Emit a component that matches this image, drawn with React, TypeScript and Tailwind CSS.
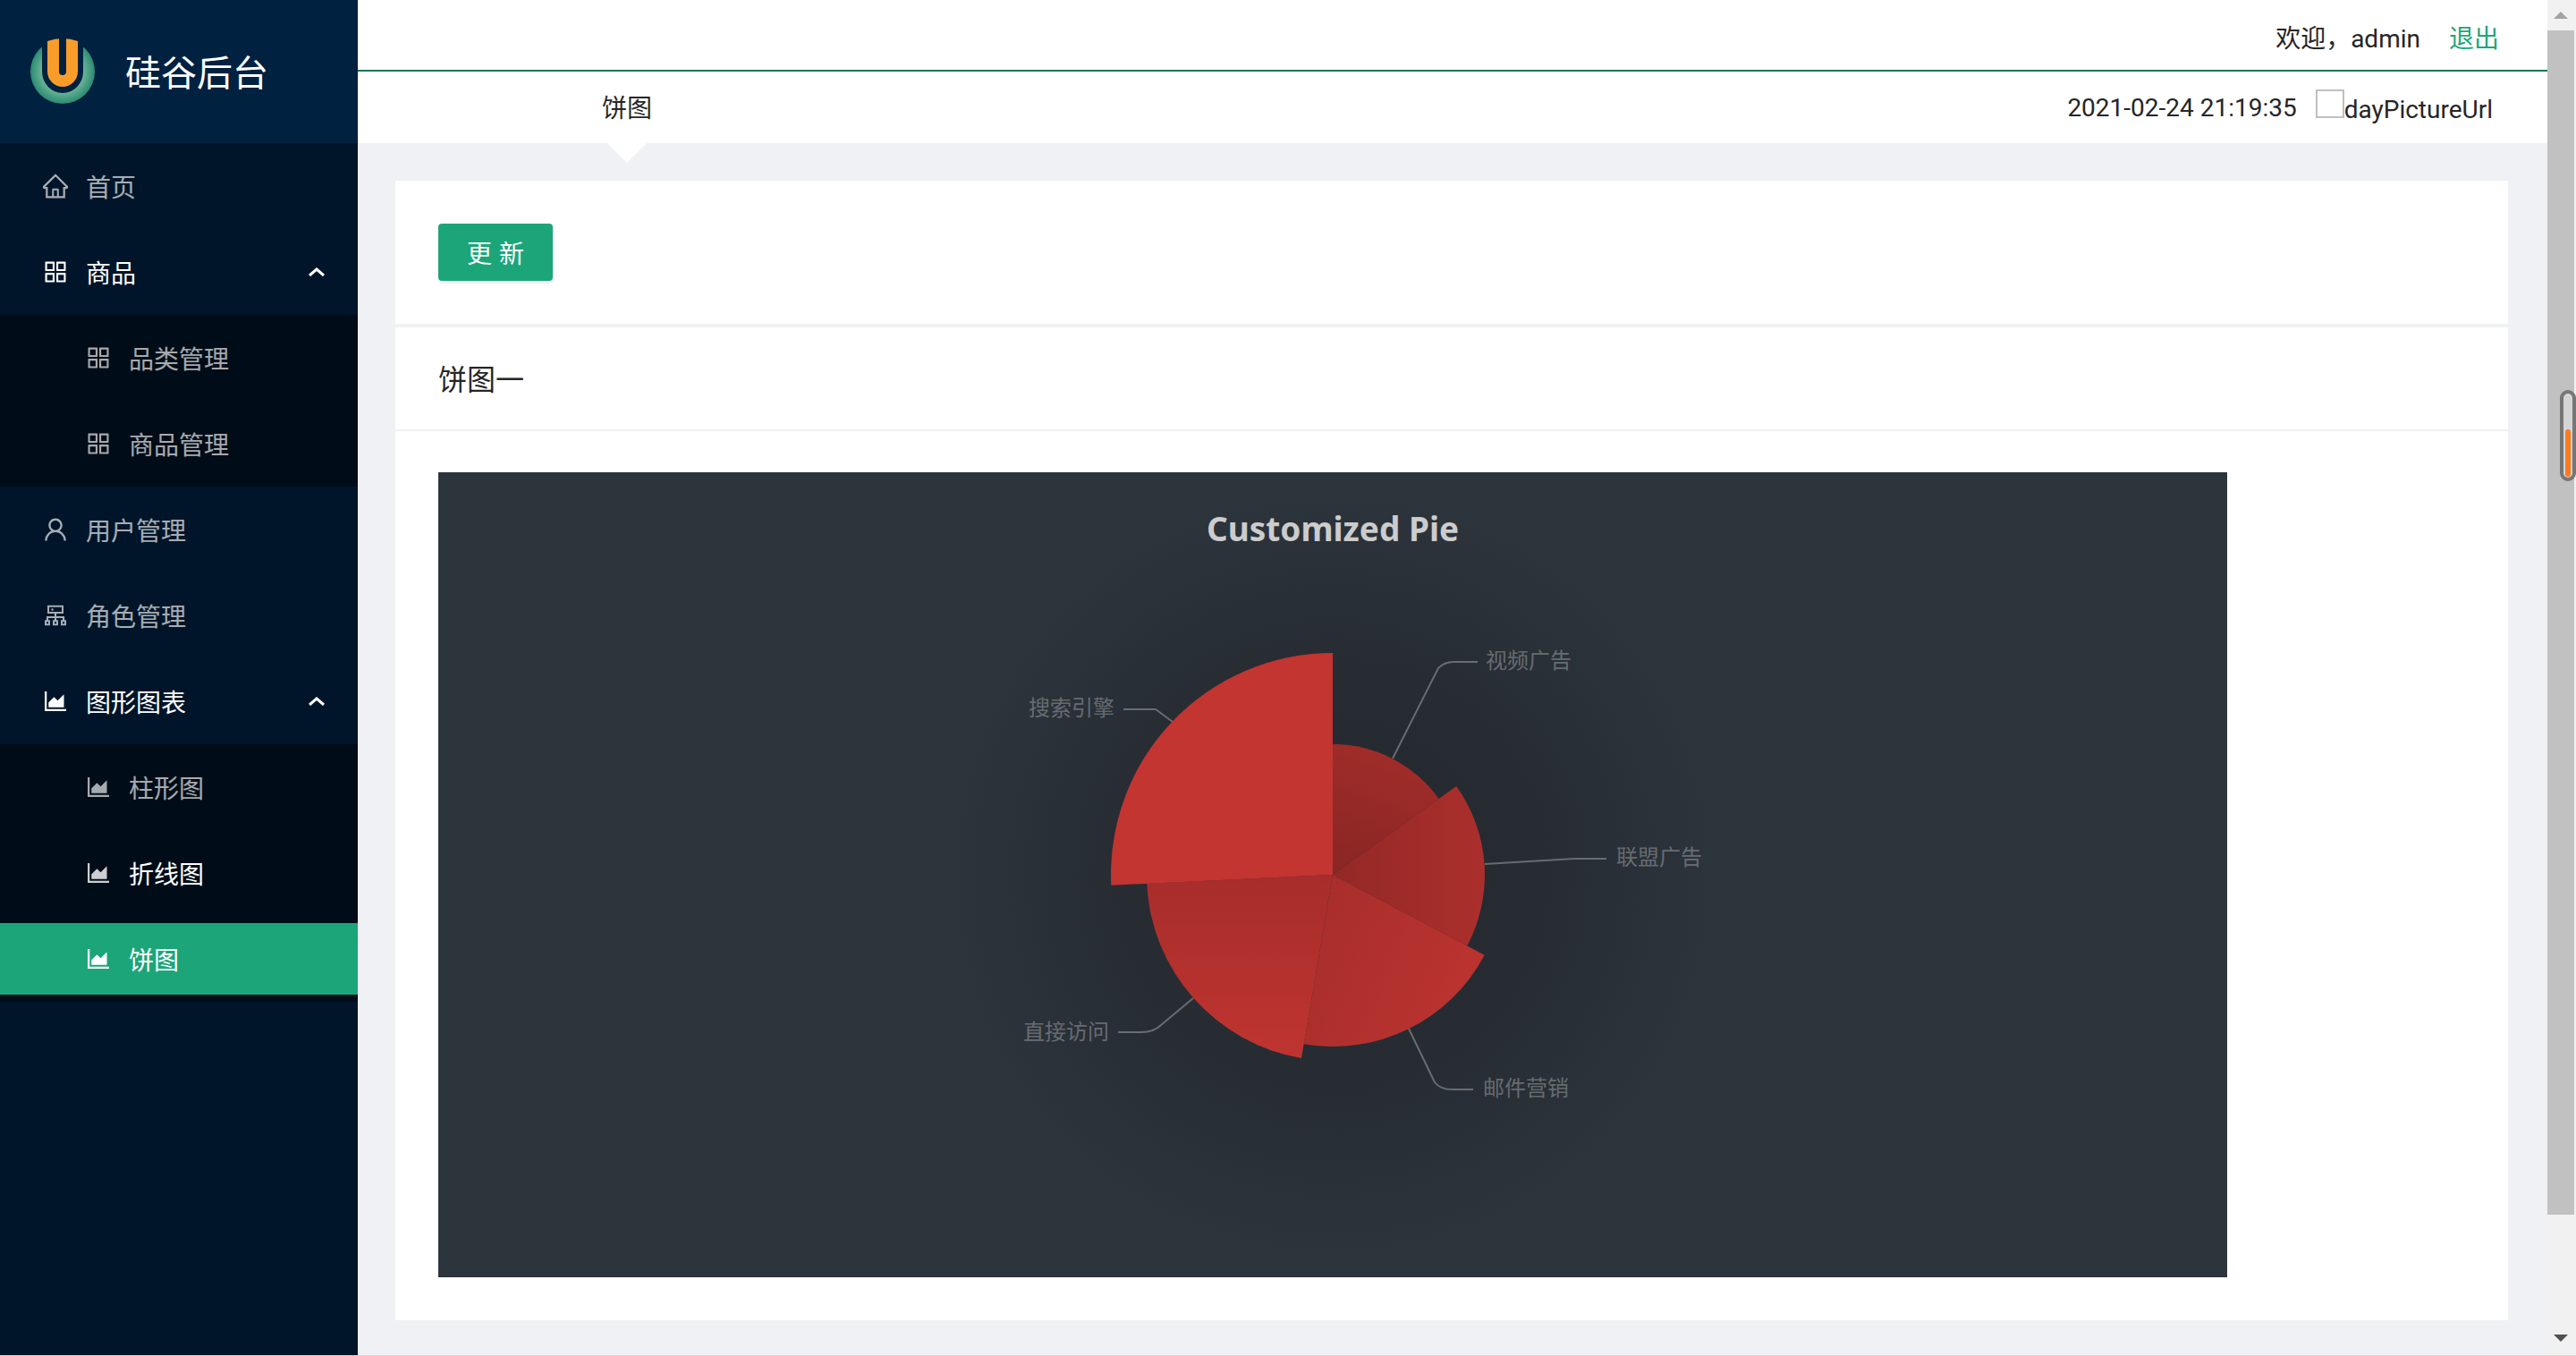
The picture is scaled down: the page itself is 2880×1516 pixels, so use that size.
import { AiOutlineCluster, AiOutlineAppstore, AiOutlineHome, AiOutlineUser, AiOutlineAreaChart } from 'react-icons/ai'

const cjk = "Roboto, 'Noto Sans CJK SC', sans-serif"

type Item = { label: string; icon: React.ReactNode; sub?: boolean; bright?: boolean; active?: boolean; open?: boolean }

const iconClass = '-ml-0.5 text-[32px]'
const Chart = <AiOutlineAreaChart className={iconClass} />
const Store = <AiOutlineAppstore className={iconClass} />

function MenuRow({ label, icon, sub, bright, active, open }: Item) {
  return (
    <div
      className={`flex h-20 items-center ${sub ? 'pl-24' : 'pl-12'} pr-[37px] text-[28px] ${
        active ? 'bg-[#1da57a] text-white' : bright ? 'text-white' : 'text-white/65'
      }`}
    >
      <span className="flex w-12 shrink-0">{icon}</span>
      <span className="flex-1 pt-[6px]">{label}</span>
      {open && (
        <svg width="18" height="10" viewBox="0 0 18 10" fill="none" stroke="white" strokeWidth="3">
          <path d="M1 9 L9 2 L17 9" />
        </svg>
      )}
    </div>
  )
}

function SubMenu({ items }: { items: Item[] }) {
  return (
    <div className="flex flex-col gap-4 bg-[#000c17] py-2">
      {items.map((item) => (
        <MenuRow key={item.label} {...item} sub />
      ))}
    </div>
  )
}

function Sidebar() {
  return (
    <aside className="w-[400px] shrink-0 bg-[#001529]">
      <div className="flex h-40 items-center gap-[34px] bg-[#002140] pl-[34px]">
        <svg width="72" height="76" viewBox="0 0 72 76">
          <defs>
            <radialGradient id="ring" cx="50%" cy="50%" r="50%">
              <stop offset="55%" stopColor="#78c09f" />
              <stop offset="100%" stopColor="#2c8a72" />
            </radialGradient>
          </defs>
          <circle cx="36" cy="38" r="36" fill="url(#ring)" />
          <path d="M13 0 H59 V38 A23 24 0 0 1 13 38 Z" fill="#002140" />
          <path d="M19 4 Q36 -2 53 4 V38 A17 17 0 0 1 19 38 Z" fill="#f99d2a" />
          <path d="M32 0 H40 V38 A4 4 0 0 1 32 38 Z" fill="#002140" />
        </svg>
        <span className="pt-1.5 text-[40px] text-white">硅谷后台</span>
      </div>
      <div className="flex flex-col pt-2">
        <MenuRow label="首页" icon={<AiOutlineHome className={iconClass} />} />
        <div className="h-4" />
        <MenuRow label="商品" icon={Store} bright open />
        <div className="h-2" />
        <SubMenu
          items={[
            { label: '品类管理', icon: Store },
            { label: '商品管理', icon: Store },
          ]}
        />
        <div className="h-2" />
        <MenuRow label="用户管理" icon={<AiOutlineUser className={iconClass} />} />
        <div className="h-4" />
        <MenuRow label="角色管理" icon={<AiOutlineCluster className={iconClass} />} />
        <div className="h-4" />
        <MenuRow label="图形图表" icon={Chart} bright open />
        <div className="h-2" />
        <SubMenu
          items={[
            { label: '柱形图', icon: Chart },
            { label: '折线图', icon: <AiOutlineAreaChart className={`${iconClass} text-white/80`} />, bright: true },
            { label: '饼图', icon: Chart, active: true },
          ]}
        />
      </div>
    </aside>
  )
}

function Header() {
  return (
    <header className="bg-white text-[28px] text-[#262626]">
      <div className="flex h-20 items-center justify-end border-b-2 border-[#007a55] pr-[54px] pt-[10px]">
        <span>欢迎，admin</span>
        <span className="ml-8 text-[#1da57a]">退出</span>
      </div>
      <div className="flex h-20 items-center">
        <div className="relative flex h-full w-[602px] items-center justify-center pt-1">
          饼图
          <div className="absolute left-1/2 top-full h-0 w-0 -translate-x-1/2 border-x-[22px] border-t-[22px] border-x-transparent border-t-white" />
        </div>
        <div className="flex flex-1 items-center justify-end pr-[61px]">
          <span className="mt-[2px]">2021-02-24 21:19:35</span>
          <span className="mb-2 ml-[21px] h-8 w-8 border-2 border-[#c0c0c0]" />
          <span className="mt-1.5">dayPictureUrl</span>
        </div>
      </div>
    </header>
  )
}

const CX = 1000
const CY = 450

function slice(r: number, from: number, to: number) {
  const p = (a: number) => {
    const t = (a * Math.PI) / 180
    return `${(CX + r * Math.sin(t)).toFixed(1)} ${(CY - r * Math.cos(t)).toFixed(1)}`
  }
  return `M${CX} ${CY} L${p(from)} A${r} ${r} 0 ${to - from > 180 ? 1 : 0} 1 ${p(to)} Z`
}

const slices = [
  { r: 146, from: 0, to: 54.4, fill: 'url(#s1)' },
  { r: 170, from: 54.4, to: 117.9, fill: 'url(#s2)' },
  { r: 192, from: 117.9, to: 189.7, fill: 'url(#s3)' },
  { r: 208, from: 189.7, to: 267.3, fill: 'url(#s4)' },
  { r: 248, from: 267.3, to: 360, fill: '#c23531' },
]

// leader lines, in chart coordinates
const leaders = [
  'M1067 320 L1118 219 Q1125 212 1135 212 L1162 212',
  'M1170 438 L1270 432 L1306 432',
  'M1085 622 L1114 682 Q1120 690 1134 690 L1157 690',
  'M844 588 L808 618 Q800 626 786 626 L760 626',
  'M821 279 L802 265 Q796 265 782 265 L766 265',
]

const labels = [
  { text: '视频广告', x: 1171, y: 209 },
  { text: '联盟广告', x: 1317, y: 429 },
  { text: '邮件营销', x: 1168, y: 687 },
  { text: '直接访问', x: 654, y: 624 },
  { text: '搜索引擎', x: 660, y: 262 },
]

function PieChart() {
  return (
    <svg width="2000" height="900" viewBox="0 0 2000 900" className="block" style={{ fontFamily: "'Noto Sans', 'Noto Sans CJK SC', sans-serif" }}>
      <defs>
        <radialGradient id="glow" gradientUnits="userSpaceOnUse" cx={CX} cy={CY} r="430">
          <stop offset="0%" stopColor="#22272e" />
          <stop offset="60%" stopColor="#282d34" />
          <stop offset="100%" stopColor="#2c343c" />
        </radialGradient>
        <linearGradient id="s1" x1="0" y1="1" x2="0.3" y2="0">
          <stop offset="0%" stopColor="#882624" />
          <stop offset="100%" stopColor="#a02c29" />
        </linearGradient>
        <linearGradient id="s2" x1="0" y1="0.5" x2="1" y2="0.5">
          <stop offset="0%" stopColor="#932826" />
          <stop offset="100%" stopColor="#ab2f2c" />
        </linearGradient>
        <linearGradient id="s3" x1="0" y1="0" x2="1" y2="0.4">
          <stop offset="0%" stopColor="#a62d2b" />
          <stop offset="100%" stopColor="#ba332f" />
        </linearGradient>
        <linearGradient id="s4" x1="0.5" y1="0" x2="0.5" y2="1">
          <stop offset="0%" stopColor="#a72d2b" />
          <stop offset="100%" stopColor="#bf3430" />
        </linearGradient>
      </defs>
      <rect width="2000" height="900" fill="#2c343c" />
      <circle cx={CX} cy={CY} r="430" fill="url(#glow)" />
      <text x="1000" y="77" textAnchor="middle" fontSize="37" fontWeight="700" fill="#cccccc">
        Customized Pie
      </text>
      {leaders.map((d) => (
        <path key={d} d={d} fill="none" stroke="rgba(255,255,255,0.3)" strokeWidth="2" />
      ))}
      {slices.map((s) => (
        <path key={s.r} d={slice(s.r, s.from, s.to)} fill={s.fill} />
      ))}
      {labels.map((l) => (
        <text key={l.text} x={l.x} y={l.y} dominantBaseline="central" fontSize="24" fill="rgba(255,255,255,0.3)">
          {l.text}
        </text>
      ))}
    </svg>
  )
}

function Content() {
  return (
    <main className="flex-1 bg-[#f0f1f5] pl-[42px] pr-[44px] pt-[42px]">
      <section className="h-40 bg-white px-12 pt-12">
        <button className="h-[64px] w-[128px] rounded bg-[#1da57a] pt-1.5 text-[28px] text-white shadow-[0_4px_0_rgba(0,0,0,0.03)]">
          <span className="-mr-2 tracking-[8px]">更新</span>
        </button>
      </section>
      <section className="mt-1 bg-white">
        <div className="flex h-[116px] items-center border-b-2 border-[#f0f0f0] px-12 pt-1 text-[32px] text-[#262626]">饼图一</div>
        <div className="px-12 pb-12 pt-[46px]">
          <PieChart />
        </div>
      </section>
    </main>
  )
}

function Scrollbar() {
  return (
    <div className="relative flex w-[32px] shrink-0 flex-col items-start bg-[#f1f1f1]">
      <div className="flex h-[34px] w-[30px] items-center justify-center">
        <div className="h-0 w-0 border-x-[8px] border-b-[8px] border-x-transparent border-b-[#a3a3a3]" />
      </div>
      <div className="h-[1324px] w-[30px] bg-[#c1c1c1]" />
      <div className="mt-auto flex h-[38px] w-[30px] items-center justify-center">
        <div className="h-0 w-0 border-x-[8px] border-t-[8px] border-x-transparent border-t-[#505050]" />
      </div>
      <div className="absolute left-[14px] top-[436px] h-[102px] w-[18px] rounded-full border-[4px] border-[#767676] bg-[#d4d4d4]">
        <div className="absolute bottom-[1px] left-[2px] top-[40px] w-[6px] rounded-full bg-[#ff7a1f]" />
      </div>
    </div>
  )
}

export default function App() {
  return (
    <div className="flex h-[1516px] w-[2880px] overflow-hidden border-b border-[#d9d6c9]" style={{ fontFamily: cjk }}>
      <Sidebar />
      <div className="flex min-w-0 flex-1 flex-col bg-[#f0f1f5]">
        <Header />
        <Content />
      </div>
      <Scrollbar />
    </div>
  )
}
